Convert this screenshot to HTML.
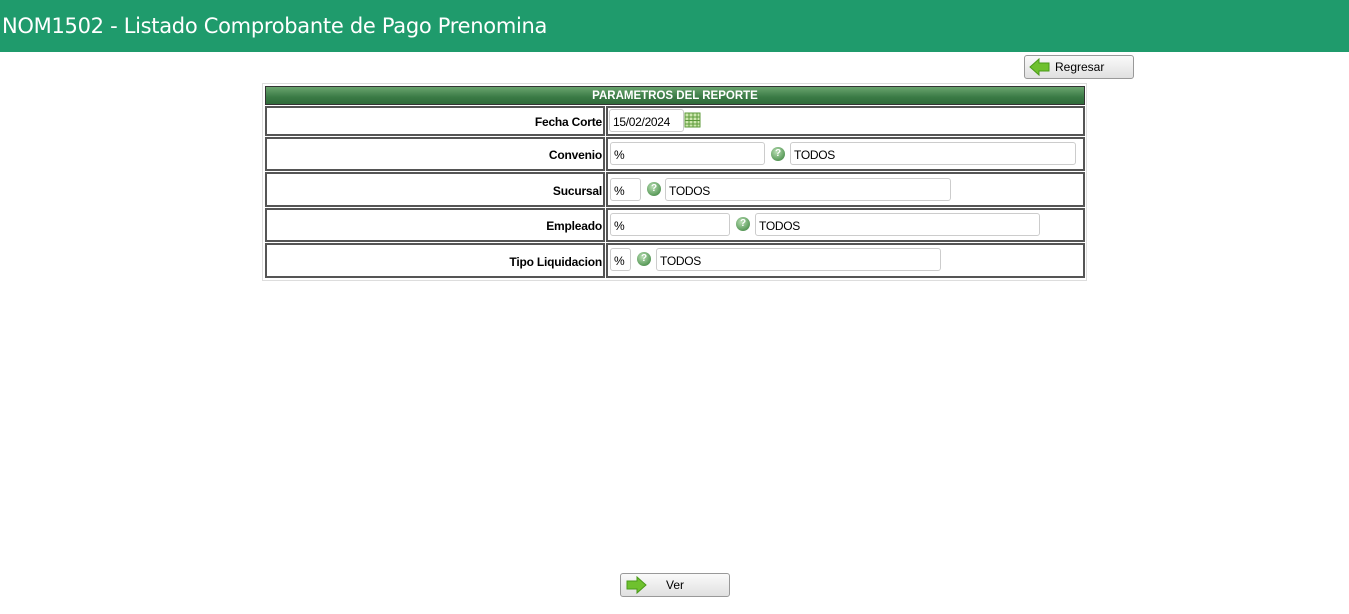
<!DOCTYPE html>
<html><head><meta charset="utf-8"><style>
*{box-sizing:border-box;margin:0;padding:0}
body{width:1349px;height:614px;background:#fff;font-family:"Liberation Sans",sans-serif;position:relative;overflow:hidden}
.hdr{position:absolute;left:0;top:0;width:1349px;height:52px;background:#1f9b6c;color:#fff;font-size:21px;padding:14px 0 0 2px;font-family:"DejaVu Sans",sans-serif;letter-spacing:-0.3px}
.a{position:absolute}
.outer{left:262px;top:83px;width:825px;height:198px;border:1px solid #ddd}
.bar{left:265px;top:86px;width:820px;height:19px;background:linear-gradient(#6aa46e,#3a7a45 60%,#2f6b3a);border:1px solid #333;color:#fff;font-weight:bold;font-size:11.5px;text-align:center;line-height:18px}
.cell{border:2px solid #555;position:absolute}
.lbl{font-weight:bold;font-size:12px;text-align:right;padding-right:1px;padding-top:2px;display:flex;align-items:center;justify-content:flex-end;letter-spacing:-0.2px}
.in{position:absolute;border:1px solid #ccc;border-radius:3px;font-size:12px;padding-left:3px;padding-top:2px;display:flex;align-items:center;height:23px;background:#fff;letter-spacing:-0.3px}
.q{position:absolute;width:14px;height:14px;border-radius:50%;background:radial-gradient(circle at 40% 35%,#b9dfb4,#5a9a5a 70%,#3f7a44);color:#fff;font-size:10px;font-weight:bold;text-align:center;line-height:14px}
.btn{position:absolute;width:110px;height:24px;border:1px solid #999;border-radius:3px;background:linear-gradient(#fafafa,#e0e0e0);font-size:12px;display:flex;align-items:center}
</style></head><body>
<div class="hdr">NOM1502 - Listado Comprobante de Pago Prenomina</div>
<div class="btn" style="left:1024px;top:55px"><svg width="22" height="18" style="margin-left:4px" viewBox="0 0 22 18"><path d="M1 9 L10 1 V5 H20 V13 H10 V17 Z" fill="#6fc12e" stroke="#4a9a1a"/></svg><span style="margin-left:4px">Regresar</span></div>
<div class="a outer"></div>
<div class="a bar">PARAMETROS DEL REPORTE</div>

<div class="cell lbl" style="left:265px;top:106px;width:340px;height:30px">Fecha Corte</div>
<div class="cell" style="left:606px;top:106px;width:479px;height:30px"></div>
<div class="in" style="left:609px;top:109px;width:75px">15/02/2024</div>
<svg class="a" style="left:684px;top:112px" width="17" height="16" viewBox="0 0 17 16"><rect x="1" y="1" width="15" height="14" fill="#cfe8b0" stroke="#5c9a3a"/><path d="M1 5H16M1 8.5H16M1 12H16M5 1V15M9 1V15M13 1V15" stroke="#5c9a3a" stroke-width="1"/></svg>

<div class="cell lbl" style="left:265px;top:137px;width:340px;height:34px">Convenio</div>
<div class="cell" style="left:606px;top:137px;width:479px;height:34px"></div>
<div class="in" style="left:610px;top:142px;width:155px">%</div>
<div class="q" style="left:771px;top:147px">?</div>
<div class="in" style="left:790px;top:142px;width:286px">TODOS</div>

<div class="cell lbl" style="left:265px;top:172px;width:340px;height:35px">Sucursal</div>
<div class="cell" style="left:606px;top:172px;width:479px;height:35px"></div>
<div class="in" style="left:610px;top:178px;width:31px">%</div>
<div class="q" style="left:647px;top:182px">?</div>
<div class="in" style="left:665px;top:178px;width:286px">TODOS</div>

<div class="cell lbl" style="left:265px;top:208px;width:340px;height:34px">Empleado</div>
<div class="cell" style="left:606px;top:208px;width:479px;height:34px"></div>
<div class="in" style="left:610px;top:213px;width:120px">%</div>
<div class="q" style="left:736px;top:217px">?</div>
<div class="in" style="left:755px;top:213px;width:285px">TODOS</div>

<div class="cell lbl" style="left:265px;top:243px;width:340px;height:35px">Tipo Liquidacion</div>
<div class="cell" style="left:606px;top:243px;width:479px;height:35px"></div>
<div class="in" style="left:610px;top:248px;width:21px">%</div>
<div class="q" style="left:637px;top:252px">?</div>
<div class="in" style="left:656px;top:248px;width:285px">TODOS</div>

<div class="btn" style="left:620px;top:573px"><svg width="22" height="18" style="margin-left:4px" viewBox="0 0 22 18"><path d="M21 9 L12 1 V5 H2 V13 H12 V17 Z" fill="#6fc12e" stroke="#4a9a1a"/></svg><span style="margin-left:19px">Ver</span></div>
</body></html>
